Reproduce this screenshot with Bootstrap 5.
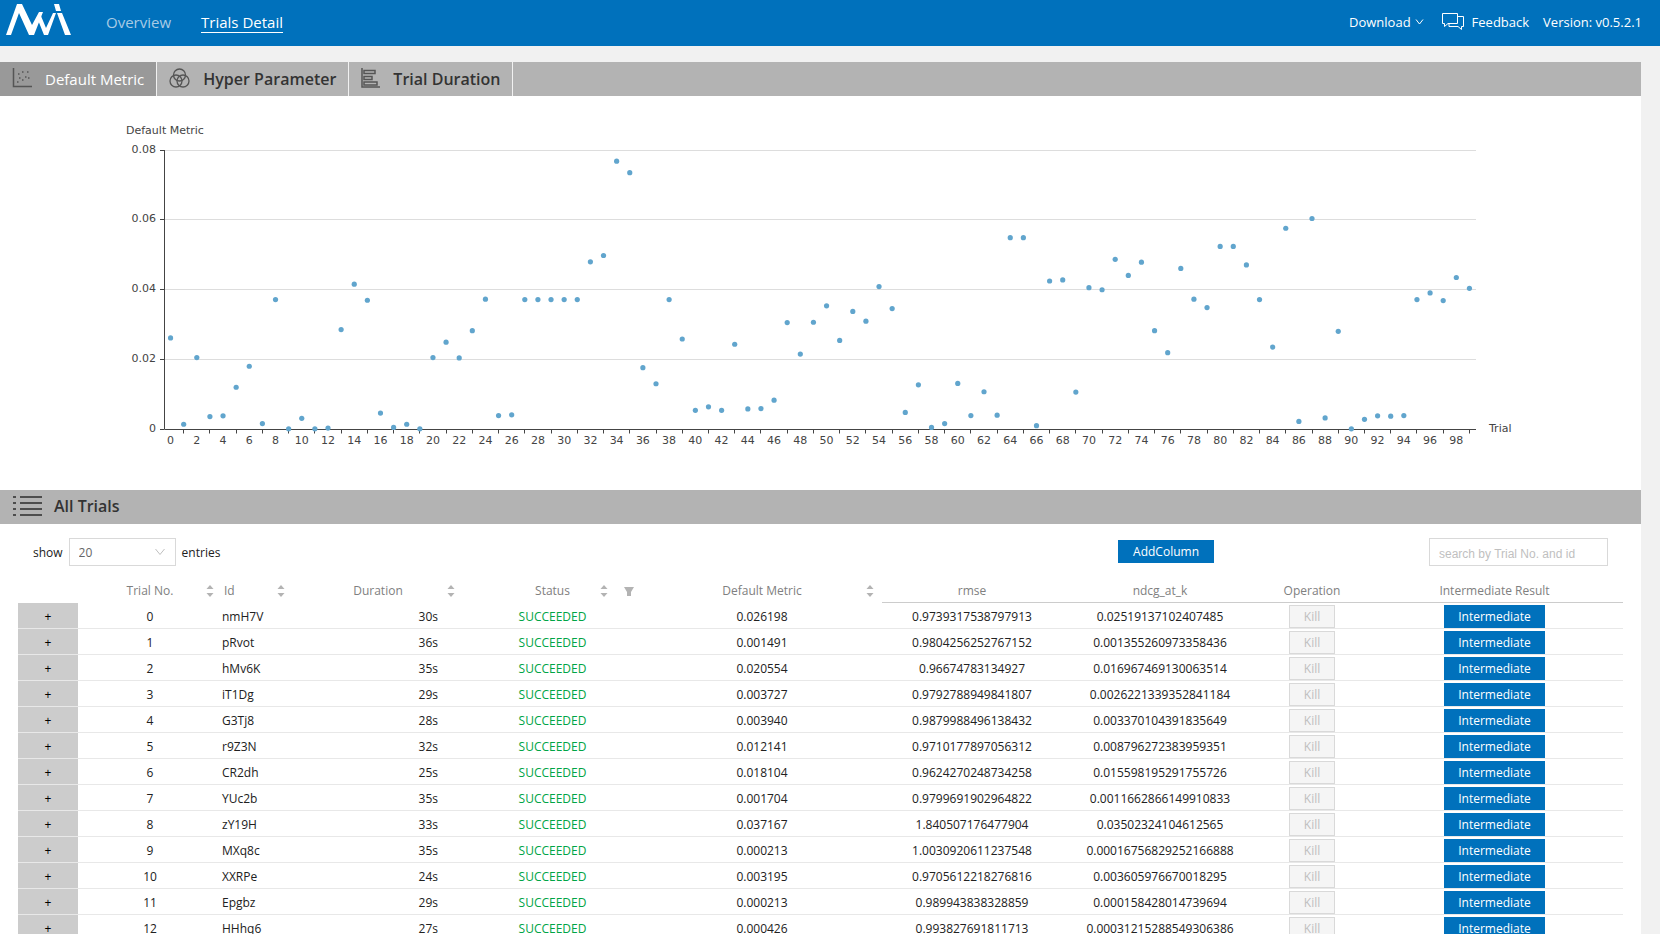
<!DOCTYPE html>
<html lang="en">
<head>
<meta charset="utf-8">
<meta name="viewport" content="width=device-width, initial-scale=1">
<title>Trials Detail</title>
<link href="https://cdn.jsdelivr.net/npm/bootstrap@5.3.0/dist/css/bootstrap.min.css" rel="stylesheet">
<style>
  body { font-family: "Open Sans", "Noto Sans", sans-serif; font-size: 13px; color: #212121; background: #f1f1f1; }
  .topbar { background: #0071bc; height: 46px; color: #fff; padding: 0 18px 2px 6px; }
  .topbar a { color: #fff; text-decoration: none; }
  .main-links { gap: 30px; font-size: 15px; line-height: 20px; margin-left: 35px; }
  .main-links a { border-bottom: 1px solid transparent; }
  .main-links a.idle { color: #a8cbe5; }
  .main-links a.current { border-color: #fff; }
  .side-links { gap: 14px; line-height: 20px; }
  .sheet { margin: 16px 19px 0 0; background: #fff; }
  .strip { background: #b3b3b3; height: 34px; color: #333; font-size: 15px; }
  .strip button { border: 0; border-right: 1px solid #f1f1f1; background: none; color: #333; font-size: 16px; font-weight: 600; padding: 0 12px; gap: 13px; }
  .strip button.chosen { background: #999; color: #fff; font-size: 15px; font-weight: 400; }
  .strip svg { margin-top: -2px; }
  .strip h2 { font-size: 16px; font-weight: 600; margin-left: 11px; }
  .list-mark { margin-left: 13px; }
  .chart { display: block; width: 100%; }
  .chart text { font-family: "DejaVu Sans", sans-serif; font-size: 11px; fill: #444; }
  .tools { padding: 14px 33px 0; height: 56px; }
  .tools label { font-size: 12px; padding-top: 2px; }
  .tools select, .tools input { height: 28px; border: 1px solid #d9d9d9; border-radius: 0; background: #fff; }
  .tools select { width: 107px; margin: 0 6px; appearance: none; padding: 2px 9px 0; color: #666; font-size: 12px;
    background: url("data:image/svg+xml,%3Csvg xmlns='http://www.w3.org/2000/svg' width='10' height='8'%3E%3Cpath d='M.5 1 5 6.500 9.500 1' fill='none' stroke='%23bfbfbf'/%3E%3C/svg%3E") no-repeat right 10px center #fff; }
  .tools input { width: 179px; font: 12px "Liberation Sans", sans-serif; padding: 4px 9px 0; }
  .tools input::placeholder { color: #bfbfbf; }
  .tool-right { gap: 215px; }
  .tool-right .act { margin-top: 2px; padding: 0 15px; }
  .act { border: 0; background: #0071bc; color: #fff; height: 23px; line-height: 21px; padding: 0 14px; font-size: 12px; display: inline-block; vertical-align: top; }
  .act:disabled { border: 1px solid #d9d9d9; background: #f5f5f5; color: #bfbfbf; }
  .trials-wrap { padding: 0 18px; }
  .trials { table-layout: fixed; width: 100%; border-collapse: separate; border-spacing: 0; text-align: center; }
  .trials th { font-size: 12px; font-weight: 400; color: #808080; height: 23px; padding: 0 8px 0 0; line-height: 20px; border-bottom: 1px solid transparent; }
  .trials th.ruled { border-color: #ccc; padding: 0; }
  .head-cell { display: grid; grid-template-columns: 1fr auto 1fr; align-items: center; padding-left: 8px; }
  .head-cell.lead-left { grid-template-columns: auto 1fr; padding-left: 2px; }
  .marks { display: flex; justify-content: flex-end; gap: 16px; }
  .trials td { height: 26px; padding: 4px 0 0; line-height: 20px; font-size: 12px; border-bottom: 1px solid #e8e8e8; vertical-align: top; white-space: nowrap; }
  .trials td.grow-cell { background: #ccc; }
  .trials td.btn-cell { padding-top: 2px; }
  .grow-cell button { border: 0; background: none; padding: 0; line-height: 20px; }
  .trials td.secs { text-align: right; padding-right: 25px; }
  .trials td.state { color: #00a445; }
  .w-grow { width: 60px } .w-no { width: 144px } .w-id { width: 71px } .w-dur { width: 170px } .w-state { width: 179px }
  .w-metric { width: 240px } .w-rmse { width: 180px } .w-ndcg { width: 196px } .w-op { width: 108px } .w-mid { width: 257px }
</style>
</head>
<body class="vh-100 overflow-hidden">
<svg class="d-none">
  <symbol id="sorter" viewBox="0 0 8 14"><path d="M.5 5 4 1l3.500 4zM.5 9 4 13l3.500-4z" fill="#b3b3b3"/></symbol>
</svg>

<header class="topbar d-flex align-items-center">
  <a href="#" aria-label="Home" class="d-flex align-self-start pt-1">
    <svg width="65" height="32" viewBox="0 0 65 32" fill="#fff"><path d="M0 31 11 0h5l10 21 7-13h4l-9 23h-5L13 9 5 31z"/><path d="M33 12h2l5 12 7-15h3L42 31h-4L32 16zM48 0h5l2 7h-5zM51 9h5l9 22h-6z"/></svg>
  </a>
  <nav class="main-links d-flex">
    <a href="#" class="idle">Overview</a>
    <a href="#" class="current">Trials Detail</a>
  </nav>
  <div class="side-links d-flex align-items-center ms-auto">
    <a href="#" class="d-flex align-items-center me-1">Download
      <svg class="ms-1" width="9" height="8" viewBox="0 0 9 8" fill="none" stroke="#fff"><path d="M1 1.500 4.500 6 8 1.500"/></svg></a>
    <a href="#" class="d-flex align-items-center">
      <svg class="me-2" width="22" height="18" viewBox="0 0 22 18" fill="none" stroke="#fff"><path d="M.5.5h15v10H6l-3.500 3v-3h-2zM15.500 3.500h6v10h-2v3l-3.500-3H7v-3"/></svg>Feedback</a>
    <span>Version: v0.5.2.1</span>
  </div>
</header>

<main class="sheet">
  <div class="strip d-flex">
    <button type="button" class="chosen d-flex align-items-center">
      <svg width="20" height="20" viewBox="0 0 20 20" fill="none" stroke="#555"><path d="M1.500 0v18.500H20" stroke-width="1.500"/><path d="M5 14h1.500M7 10h1.500M6 6h1.500M10 12h1.500M10 4h1.500M13 9h1.500M15 4h1.500M16 10h1.500" stroke-width="1.500"/></svg>Default Metric</button>
    <button type="button" class="d-flex align-items-center">
      <svg width="21" height="20" viewBox="0 0 21 20" fill="none" stroke="#555" stroke-width="1.300"><circle cx="10.500" cy="7" r="6"/><circle cx="7" cy="13" r="6"/><circle cx="14" cy="13" r="6"/></svg>Hyper Parameter</button>
    <button type="button" class="d-flex align-items-center">
      <svg width="19" height="20" viewBox="0 0 19 20" fill="none" stroke="#555" stroke-width="1.500"><path d="M1 0v19h18M3 2.500h11v3H3zM3 8.500h8v3H3zM3 14h13v3H3z"/></svg>Trial Duration</button>
  </div>

  <svg class="chart" id="chart" viewBox="0 0 1641 394" role="img" aria-label="Default Metric by trial"></svg>

  <div class="strip d-flex align-items-center">
    <svg class="list-mark" width="30" height="22" viewBox="0 0 30 22" stroke="#4d4d4d" stroke-width="2"><path d="M0 2h3M7 2h22M0 8h3M7 8h22M0 14h3M7 14h22M0 20h3M7 20h22"/></svg>
    <h2 class="mb-0">All Trials</h2>
  </div>

  <div class="tools d-flex align-items-start">
    <div class="d-flex align-items-center">
      <label for="size">show</label>
      <select id="size"><option>20</option><option>50</option><option>100</option></select>
      <label for="size">entries</label>
    </div>
    <div class="tool-right d-flex align-items-start ms-auto">
      <button type="button" class="act">AddColumn</button>
      <input type="text" placeholder="search by Trial No. and id" aria-label="search by Trial No. and id">
    </div>
  </div>

  <div class="trials-wrap">
    <table class="trials">
      <colgroup><col class="w-grow"><col class="w-no"><col class="w-id"><col class="w-dur"><col class="w-state"><col class="w-metric"><col class="w-rmse"><col class="w-ndcg"><col class="w-op"><col class="w-mid"></colgroup>
      <thead>
        <tr>
          <th></th>
          <th><div class="head-cell"><i></i><span>Trial No.</span><span class="marks"><svg width="8" height="14"><use href="#sorter"/></svg></span></div></th>
          <th><div class="head-cell lead-left"><span>Id</span><span class="marks"><svg width="8" height="14"><use href="#sorter"/></svg></span></div></th>
          <th><div class="head-cell"><i></i><span>Duration</span><span class="marks"><svg width="8" height="14"><use href="#sorter"/></svg></span></div></th>
          <th><div class="head-cell"><i></i><span>Status</span><span class="marks"><svg width="8" height="14"><use href="#sorter"/></svg><svg width="10" height="14" viewBox="0 0 10 14" fill="#b3b3b3"><path d="M0 3h10L7 8v4H3V8z"/></svg></span></div></th>
          <th><div class="head-cell"><i></i><span>Default Metric</span><span class="marks"><svg width="8" height="14"><use href="#sorter"/></svg></span></div></th>
          <th class="ruled">rmse</th>
          <th class="ruled">ndcg_at_k</th>
          <th class="ruled">Operation</th>
          <th class="ruled">Intermediate Result</th>
        </tr>
      </thead>
      <tbody id="rows"></tbody>
    </table>
  </div>
</main>

<script src="https://cdn.jsdelivr.net/npm/bootstrap@5.3.0/dist/js/bootstrap.bundle.min.js"></script>
<script>
  const trials = [
    ['nmH7V', 30, '0.026198', '0.9739317538797913', '0.02519137102407485'],
    ['pRvot', 36, '0.001491', '0.9804256252767152', '0.001355260973358436'],
    ['hMv6K', 35, '0.020554', '0.96674783134927', '0.016967469130063514'],
    ['iT1Dg', 29, '0.003727', '0.9792788949841807', '0.0026221339352841184'],
    ['G3Tj8', 28, '0.003940', '0.9879988496138432', '0.003370104391835649'],
    ['r9Z3N', 32, '0.012141', '0.9710177897056312', '0.008796272383959351'],
    ['CR2dh', 25, '0.018104', '0.9624270248734258', '0.015598195291755726'],
    ['YUc2b', 35, '0.001704', '0.9799691902964822', '0.0011662866149910833'],
    ['zY19H', 33, '0.037167', '1.840507176477904', '0.03502324104612565'],
    ['MXq8c', 35, '0.000213', '1.0030920611237548', '0.00016756829252166888'],
    ['XXRPe', 24, '0.003195', '0.9705612218276816', '0.003605976670018295'],
    ['Epgbz', 29, '0.000213', '0.989943838328859', '0.000158428014739694'],
    ['HHhq6', 27, '0.000426', '0.993827691811713', '0.00031215288549306386']
  ];
  document.getElementById('rows').innerHTML = trials.map((t, i) => `<tr>
    <td class="grow-cell"><button type="button" aria-label="Expand trial ${i}">+</button></td>
    <td>${i}</td><td class="text-start">${t[0]}</td><td class="secs">${t[1]}s</td><td class="state">SUCCEEDED</td>
    <td>${t[2]}</td><td>${t[3]}</td><td>${t[4]}</td>
    <td class="btn-cell"><button type="button" class="act" disabled>Kill</button></td>
    <td class="btn-cell"><button type="button" class="act">Intermediate</button></td></tr>`).join('');

  // default metric of each trial, in trial order
  const metric = [.0262,.0015,.0206,.0037,.0039,.0121,.0181,.0017,.0372,.0002,.0032,.0002,.0004,.0286,.0416,.0370,.0047,.0006,.0015,.0002,
    .0206,.0250,.0205,.0283,.0373,.0040,.0042,.0372,.0372,.0372,.0372,.0372,.0480,.0498,.0768,.0735,.0177,.0131,.0372,.0259,
    .0055,.0065,.0055,.0244,.0059,.0060,.0084,.0306,.0216,.0307,.0354,.0255,.0338,.0310,.0409,.0346,.0049,.0128,.0006,.0017,
    .0132,.0040,.0108,.0041,.0549,.0549,.0011,.0425,.0428,.0107,.0406,.0400,.0487,.0441,.0479,.0283,.0220,.0461,.0373,.0349,
    .0524,.0524,.0471,.0372,.0236,.0576,.0023,.0604,.0033,.0281,.0002,.0029,.0039,.0038,.0040,.0372,.0391,.0369,.0435,.0404];
  const left = 164, right = 1476, base = 333.5, top80 = 54;
  const X = i => left + (i + .5) * (right - left) / 100;
  const Y = v => base - v * (base - top80) / .08;
  let s = '';
  [0, .02, .04, .06, .08].forEach(v => {
    const y = Math.floor(Y(v)) + .5;
    if (v) s += `<path d="M${left} ${y}H${right}" stroke="#ddd"/>`;
    s += `<path d="M${left - 4} ${y}H${left}" stroke="#444"/><text x="156" y="${y + 2}" text-anchor="end">${v}</text>`;
  });
  s += `<path d="M${left + .5} 54V${base}H${right}" fill="none" stroke="#444"/>`;
  for (let i = 0; i < 100; i += 2)
    s += `<path d="M${Math.floor(X(i + 1)) + .5} ${base}v4" stroke="#444"/><text x="${X(i)}" y="348" text-anchor="middle">${i}</text>`;
  metric.forEach((v, i) => s += `<circle cx="${X(i)}" cy="${Y(v)}" r="2.600" fill="#61a5cd"/>`);
  s += `<text x="126" y="38">Default Metric</text><text x="1489" y="336">Trial</text>`;
  document.getElementById('chart').innerHTML = s;
</script>
</body>
</html>
